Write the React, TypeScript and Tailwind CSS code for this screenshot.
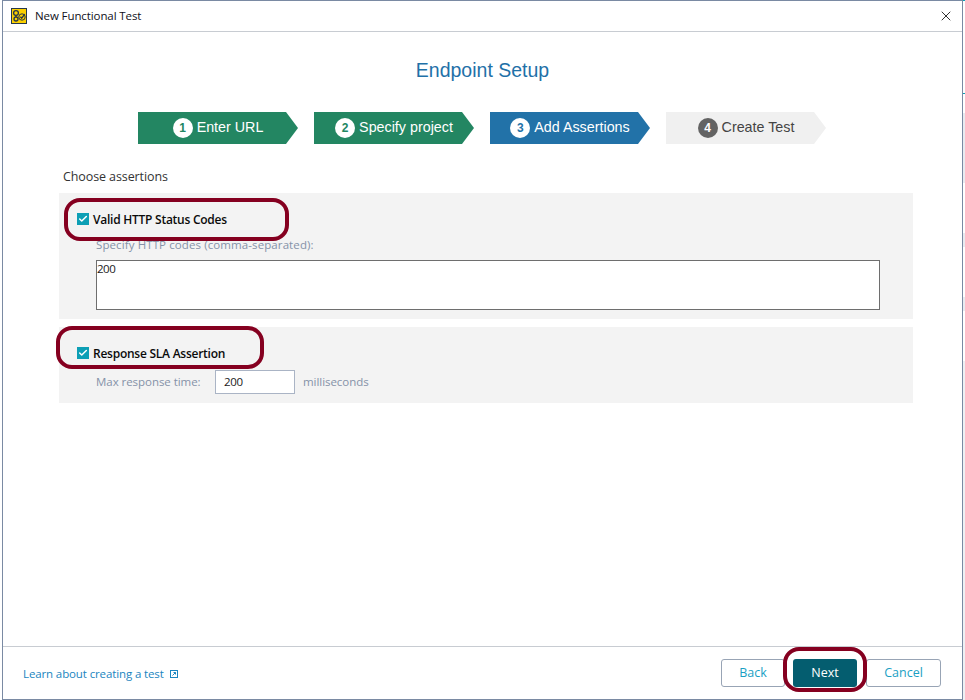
import React from 'react';
import { Check, X } from 'lucide-react';

const steps = [
  { n: 1, label: 'Enter URL', box: 'bg-[#238662] text-white', dot: 'bg-white text-[#238662]' },
  { n: 2, label: 'Specify project', box: 'bg-[#238662] text-white', dot: 'bg-white text-[#238662]' },
  { n: 3, label: 'Add Assertions', box: 'bg-[#2272a8] text-white', dot: 'bg-white text-[#2272a8]' },
  { n: 4, label: 'Create Test', box: 'bg-[#f0f0f0] text-[#444444]', dot: 'bg-[#636363] text-white' },
];

function AppIcon() {
  return (
    <svg width="16" height="16" viewBox="0 0 16 16" className="shrink-0">
      <rect x="0.5" y="0.5" width="15" height="15" fill="#fbd000" stroke="#27384a" />
      <circle cx="5" cy="5" r="2.4" fill="none" stroke="#27384a" strokeWidth="1.3" />
      <circle cx="5" cy="11" r="2" fill="none" stroke="#27384a" strokeWidth="1.3" />
      <path d="M5 7.5v1.5" stroke="#27384a" strokeWidth="1.2" />
      <circle cx="11" cy="9" r="3.2" fill="none" stroke="#27384a" strokeWidth="1" />
      <path d="M9.4 8.8l1.3 1.4 3-4" fill="none" stroke="#27384a" strokeWidth="1.3" />
    </svg>
  );
}

function Tick({ label }: { label: string }) {
  return (
    <div className="flex items-center gap-1">
      <span className="flex h-3 w-3 items-center justify-center bg-[#0d9fb5]">
        <Check className="h-2.5 w-2.5 text-white" strokeWidth={3.5} />
      </span>
      <span className="relative top-px text-[12px] font-semibold leading-4 tracking-[-0.25px] text-[#0b0b0b]">{label}</span>
    </div>
  );
}

export default function App() {
  return (
    <div className="flex h-[700px] w-[965px] overflow-hidden bg-white pl-[2px] font-['Open_Sans',sans-serif]">
      {/* dialog */}
      <div className="relative flex h-full w-[961px] shrink-0 flex-col border border-[#7a8aa3] bg-white">
        <div className="flex h-[31px] shrink-0 items-center border-b border-[#c8ccd2] pl-2 pr-[8px]">
          <AppIcon />
          <span className="ml-2 text-[11.5px] tracking-[-0.1px] text-[#101020]">New Functional Test</span>
          <X className="ml-auto h-4 w-4 text-[#111111]" strokeWidth={1.3} />
        </div>

        <div className="flex flex-1 flex-col">
          <h1 className="mt-[26px] text-center font-['Liberation_Sans',sans-serif] text-[19.5px] leading-6 text-[#1f71a8]">
            Endpoint Setup
          </h1>

          <div className="mt-[30px] flex justify-center gap-4 pr-px font-['Liberation_Sans',sans-serif]">
            {steps.map(s => (
              <div
                key={s.n}
                className={`flex h-8 w-40 items-center justify-center gap-1 text-[14.3px] [clip-path:polygon(0_0,148px_0,100%_50%,148px_100%,0_100%)] ${s.box}`}
              >
                <span className={`flex h-5 w-5 items-center justify-center rounded-full text-[12px] font-bold ${s.dot}`}>
                  {s.n}
                </span>
                {s.label}
              </div>
            ))}
          </div>

          <div className="mt-6 pl-[60px] text-[12.5px] leading-[17px] tracking-[-0.1px] text-[#333333]">Choose assertions</div>

          <div className="ml-[56px] mr-[49px] mt-2 h-[126px] bg-[#f3f3f3] pl-[18px] pt-[18px]">
            <Tick label="Valid HTTP Status Codes" />
            <div className="ml-[19px] mt-[10px] text-[11.5px] leading-4 tracking-[0.1px] text-[#8592a8]">Specify HTTP codes (comma-separated):</div>
            <div className="ml-[19px] mt-[7px] h-[50px] w-[784px] border border-[#6e6e6e] bg-white pt-0 text-[11.5px] leading-4 tracking-[-0.5px] text-[#1a1a1a]">200</div>
          </div>

          <div className="ml-[56px] mr-[49px] mt-2 h-[76px] bg-[#f3f3f3] pl-[18px] pt-[18px]">
            <Tick label="Response SLA Assertion" />
            <div className="ml-[19px] mt-[9px] flex items-center text-[11.5px] tracking-[-0.05px] text-[#8592a8]">
              <span className="w-[119px]">Max response time:</span>
              <span className="flex h-6 w-20 items-center border border-[#aab4c5] bg-white pl-2 tracking-[-0.3px] text-[#1a1a1a]">200</span>
              <span className="ml-2">milliseconds</span>
            </div>
          </div>
        </div>

        <div className="flex h-[53px] shrink-0 items-start border-t border-[#c8ccd2] pl-5 pr-[21px] pt-3">
          <a className="mt-[7px] flex items-center gap-[6px] text-[11.5px] leading-4 tracking-[-0.12px] text-[#1a85c0]">
            Learn about creating a test
            <svg width="9" height="9" viewBox="0 0 9 9" fill="none" stroke="#1a85c0">
              <rect x="0.5" y="0.5" width="7" height="7" />
              <path d="M2.5 5.5l3-3M3.5 2.5h2v2" />
            </svg>
          </a>
          <div className="ml-auto flex text-[12.5px]">
            <button className="h-7 w-16 rounded-[3px] border border-[#98a4b5] bg-white text-[#1a9fc4]">Back</button>
            <button className="ml-2 h-7 w-16 rounded-[3px] bg-[#045d6f] text-white">Next</button>
            <button className="ml-[9px] h-7 w-[75px] rounded-[3px] border border-[#98a4b5] bg-white text-[#1a9fc4]">Cancel</button>
          </div>
        </div>

        {/* annotation ovals drawn over the dialog */}
        <div className="absolute left-[61px] top-[197px] h-[43px] w-[225px] rounded-[16px] border-4 border-[#850020]" />
        <div className="absolute left-[53px] top-[325px] h-[43px] w-[208px] rounded-[16px] border-4 border-[#850020]" />
        <div className="absolute left-[780px] top-[646px] h-[45px] w-[84px] rounded-[16px] border-4 border-[#850020]" />
      </div>

      {/* sliver of the window behind */}
      <div className="flex w-[2px] flex-1 flex-col bg-white">
        <div className="h-[1px] bg-[#0d9fb5]" />
        <div className="mt-[92px] h-[1px] bg-[#0d9fb5]" />
        <div className="mt-[19px] h-[70px] bg-[#e9ebf0]" />
        <div className="mt-[50px] h-[14px] bg-[#e9ebf0]" />
        <div className="mt-[50px] h-[14px] bg-[#e9ebf0]" />
        <div className="mt-[50px] flex-1 bg-[#eef0f3]" />
      </div>
    </div>
  );
}
